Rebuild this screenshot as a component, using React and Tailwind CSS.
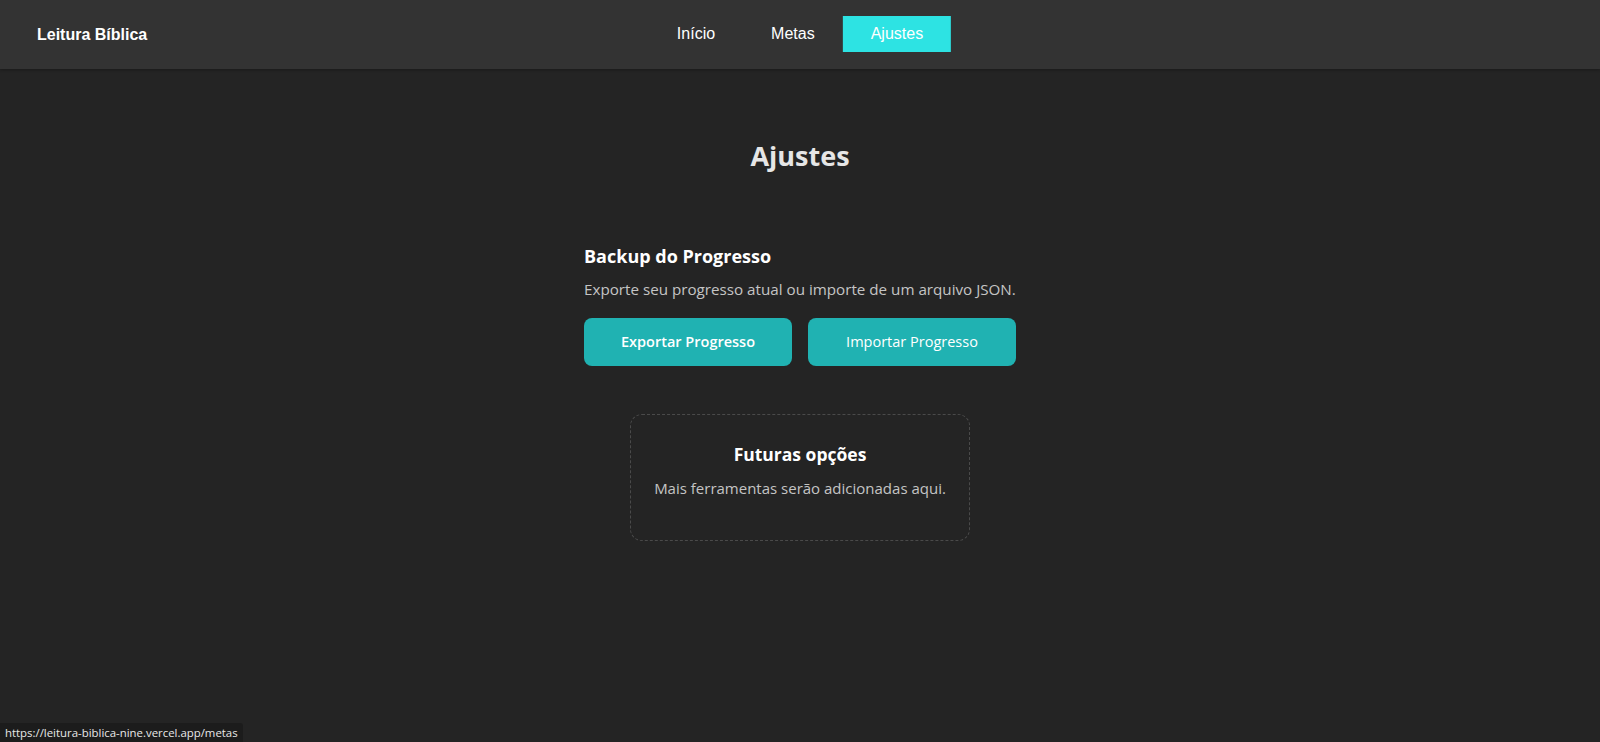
import React from 'react';

const navItems = ['Início', 'Metas', 'Ajustes'];

export default function App() {
  const active = 'Ajustes';

  return (
    <div className="min-h-screen bg-[#242424] font-['Open_Sans',sans-serif]">
      {/* Header */}
      <header className="relative flex h-[69px] items-center bg-[#333333] px-[37px] shadow-[0_1px_3px_rgba(0,0,0,0.3)]">
        <span className="font-['Liberation_Sans',Arial,sans-serif] text-[16px] font-bold text-white">
          Leitura Bíblica
        </span>
        <nav className="absolute left-1/2 top-[16px] flex -translate-x-1/2">
          {navItems.map((item) => (
            <button
              key={item}
              className={`h-[36px] px-[28px] font-['Liberation_Sans',Arial,sans-serif] text-[16px] text-white ${
                item === active ? 'bg-[#2de3e3]' : 'bg-transparent'
              }`}
            >
              {item}
            </button>
          ))}
        </nav>
      </header>

      {/* Content */}
      <main className="flex flex-col items-center pt-[73px]">
        <h1 className="text-[27px] font-bold leading-none text-[#e6e6e6]">Ajustes</h1>

        <section className="mt-[78px] w-[432px]">
          <h2 className="text-[18px] font-bold leading-none text-white">Backup do Progresso</h2>
          <p className="mt-[17px] text-[15.2px] leading-none text-[#c4c4c4]">
            Exporte seu progresso atual ou importe de um arquivo JSON.
          </p>
          <div className="mt-[21px] flex gap-[16px]">
            <button className="h-[48px] flex-1 rounded-[8px] bg-[#20b2b2] text-[14.5px] font-semibold text-white">
              Exportar Progresso
            </button>
            <label className="flex h-[48px] flex-1 cursor-pointer items-center justify-center rounded-[8px] bg-[#20b2b2] text-[14.5px] text-white">
              Importar Progresso
            </label>
          </div>
        </section>

        <section className="mt-[48px] flex h-[127px] w-[340px] flex-col items-center rounded-[12px] border border-dashed border-[#4a4a4a] pt-[31px]">
          <h3 className="text-[17.5px] font-bold leading-none text-white">Futuras opções</h3>
          <p className="mt-[17px] text-[15px] leading-none text-[#c4c4c4]">
            Mais ferramentas serão adicionadas aqui.
          </p>
        </section>
      </main>

      {/* Browser status bubble */}
      <div className="fixed bottom-0 left-0 flex h-[19px] items-center rounded-tr-[3px] bg-[#1c1c1c] px-[5px] text-[11.4px] text-[#e8e8e8]">
        https://leitura-biblica-nine.vercel.app/metas
      </div>
    </div>
  );
}
